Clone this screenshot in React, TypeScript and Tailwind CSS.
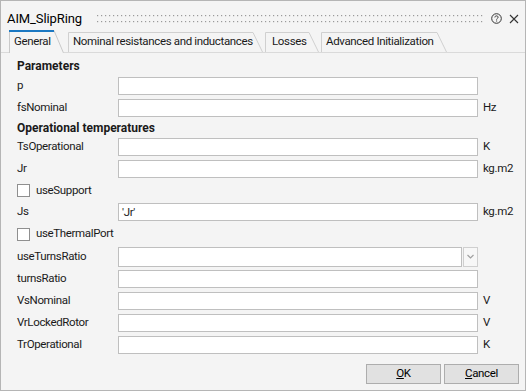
import React from "react";

const font = "font-['Roboto',Arial,sans-serif]";

function Field({ label, unit, value }: { label: string; unit?: string; value?: string }) {
  return (
    <div className="flex h-[22px] items-center">
      <div className="w-[101px] shrink-0 whitespace-nowrap leading-none">{label}</div>
      <div className="h-[18px] w-[360px] shrink-0 border border-[#bfbfbf] bg-white px-[3px] leading-[16px]">
        {value}
      </div>
      {unit && <div className="ml-[5px] leading-none">{unit}</div>}
    </div>
  );
}

function Check({ label, h }: { label: string; h: string }) {
  return (
    <div className={`flex items-center ${h}`}>
      <div className="h-[13px] w-[13px] border border-[#8f8f8f] bg-white" />
      <div className="ml-[6px] leading-none">{label}</div>
    </div>
  );
}

function Tab({ label, w, active, pl }: { label: string; w: number; active?: boolean; pl: string }) {
  const h = active ? 22 : 20;
  return (
    <div
      className={`relative flex shrink-0 items-center whitespace-nowrap ${pl} ${active ? "z-10 -mb-px h-[23px] bg-[#f4f4f4]" : "h-[20px]"}`}
      style={{ width: w }}
    >
      <svg className="absolute left-0 top-0" width={w} height={h + (active ? 1 : 0)}>
        {active ? (
          <>
            <path d={`M0.5 ${h + 1} V0.5 H${w - 10} L${w - 0.5} ${h + 1}`} fill="#f4f4f4" stroke="#c9c9c9" />
            <rect x="0" y="0" width={w - 10} height="2" fill="#1b78c2" />
          </>
        ) : (
          <path d={`M0.5 ${h} V0.5 H${w - 10} L${w - 0.5} ${h}`} fill="#f4f4f4" stroke="#d0d0d0" />
        )}
      </svg>
      <span className="relative leading-none">{label}</span>
    </div>
  );
}

export default function App() {
  return (
    <div
      className={`flex h-[391px] w-[526px] flex-col border-x border-b border-t border-[#b5b5b5] bg-[#f4f4f4] text-[11.5px] tracking-[-0.35px] text-[#1a1a1a] ${font}`}
    >
      {/* title bar */}
      <div className="flex h-[29px] items-center pt-[6px] pl-[6px] pr-[10px]">
        <div className="w-[90px] shrink-0 text-[13px] leading-none tracking-[-0.1px] text-black">AIM_SlipRing</div>
        <svg className="shrink-0" width="386" height="9">
          {Array.from({ length: 97 }).map((_, i) => (
            <g key={i}>
              <rect x={i * 4} y={1} width="1.2" height="1.2" fill="#9a9a9a" />
              <rect x={i * 4} y={7} width="1.2" height="1.2" fill="#9a9a9a" />
            </g>
          ))}
        </svg>
        <svg className="ml-[8px] shrink-0" width="11" height="11" viewBox="0 0 11 11">
          <circle cx="5.5" cy="5.5" r="4.8" fill="none" stroke="#333" strokeWidth="1" />
          <path d="M3.9 4.4 C3.9 3.4 4.6 2.9 5.5 2.9 C6.4 2.9 7.1 3.4 7.1 4.3 C7.1 5.3 5.6 5.4 5.6 6.6" fill="none" stroke="#333" strokeWidth="1" />
          <rect x="5.1" y="7.5" width="1" height="1" fill="#333" />
        </svg>
        <svg className="ml-[7px] shrink-0" width="10" height="10" viewBox="0 0 10 10">
          <path d="M1 1 L9 9 M9 1 L1 9" stroke="#333" strokeWidth="1.1" />
        </svg>
      </div>

      {/* tabs */}
      <div className="flex h-[23px] items-end border-b border-[#dadada] pl-[8px]">
        <Tab label="General" w={55} active pl="pl-[5px]" />
        <div className="w-[4px]" />
        <Tab label="Nominal resistances and inductances" w={195} pl="pl-[5px]" />
        <div className="w-[2px]" />
        <Tab label="Losses" w={54} pl="pl-[7px]" />
        <div className="w-[2px]" />
        <Tab label="Advanced Initialization" w={126} pl="pl-[5px]" />
      </div>

      {/* content */}
      <div className="flex flex-col pl-[16px] pt-[3px]">
        <div className="flex h-[19px] items-center text-[12px] font-bold leading-none tracking-[0px]">Parameters</div>
        <Field label="p" />
        <Field label="fsNominal" unit="Hz" />
        <div className="flex h-[17px] items-center text-[12px] font-bold leading-none tracking-[0px]">Operational temperatures</div>
        <Field label="TsOperational" unit="K" />
        <Field label="Jr" unit="kg.m2" />
        <Check label="useSupport" h="h-[21px]" />
        <Field label="Js" unit="kg.m2" value="'Jr'" />
        <Check label="useThermalPort" h="h-[22px]" />
        <div className="flex h-[23px] items-center">
          <div className="w-[101px] shrink-0 leading-none">useTurnsRatio</div>
          <div className="h-[20px] w-[344px] shrink-0 border border-[#bfbfbf] bg-white" />
          <div className="ml-[1px] flex h-[20px] w-[15px] shrink-0 items-center justify-center border border-[#cfcfcf] bg-[#f7f7f7]">
            <svg width="7" height="5" viewBox="0 0 7 5">
              <path d="M0.5 1 L3.5 4 L6.5 1" fill="none" stroke="#a0a0a0" strokeWidth="1.2" />
            </svg>
          </div>
        </div>
        <Field label="turnsRatio" />
        <Field label="VsNominal" unit="V" />
        <Field label="VrLockedRotor" unit="V" />
        <Field label="TrOperational" unit="K" />
      </div>

      {/* buttons */}
      <div className="mt-[8px] flex justify-end gap-[3px] pr-[6px]">
        <button className="flex h-[20px] w-[75px] items-center justify-center border border-[#adadad] bg-[#e1e1e1] leading-none text-black">
          <span><span className="underline">O</span>K</span>
        </button>
        <button className="flex h-[20px] w-[75px] items-center justify-center border border-[#adadad] bg-[#e1e1e1] leading-none text-black">
          <span><span className="underline">C</span>ancel</span>
        </button>
      </div>
    </div>
  );
}
